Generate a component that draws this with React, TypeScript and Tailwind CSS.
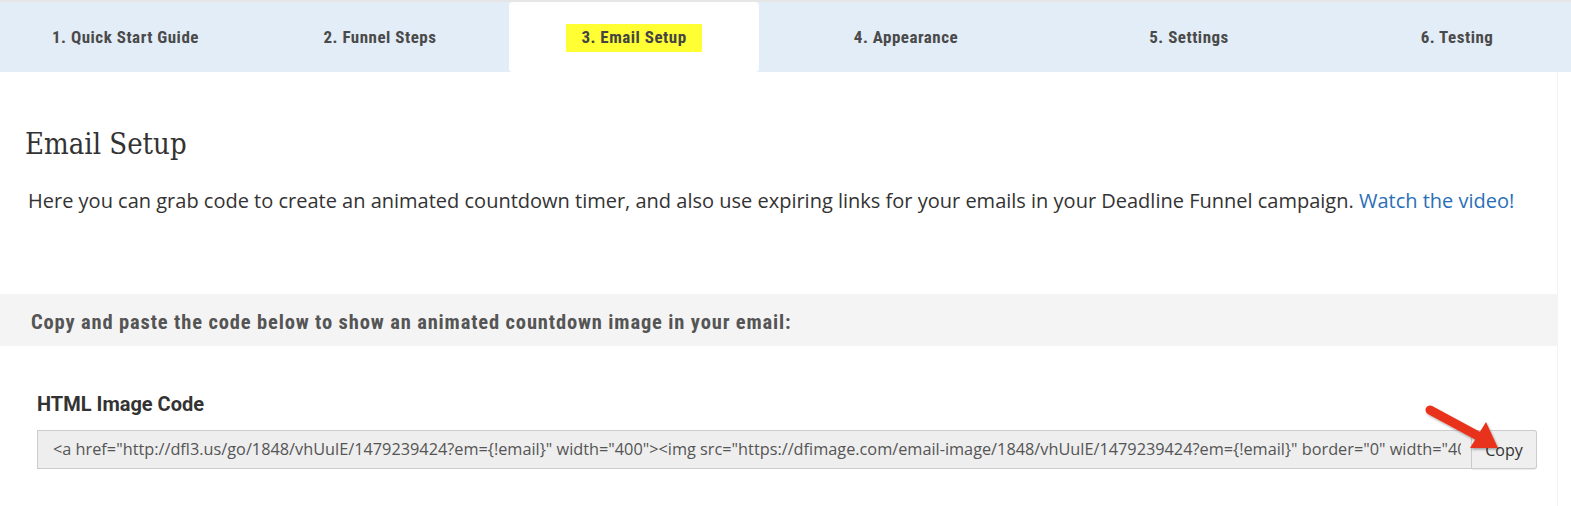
import React from 'react';

const tabs = [
  { label: '1. Quick Start Guide', w: 'w-[251px]' },
  { label: '2. Funnel Steps', w: 'w-[258px]' },
  { label: '3. Email Setup', w: 'w-[250px]', active: true },
  { label: '4. Appearance', w: 'w-[294px]' },
  { label: '5. Settings', w: 'w-[272px]' },
  { label: '6. Testing', w: 'w-[264px]' },
];

const code =
  '<a href="http://dfl3.us/go/1848/vhUulE/1479239424?em={!email}" width="400"><img src="https://dfimage.com/email-image/1848/vhUulE/1479239424?em={!email}" border="0" width="400" alt="countdown" /></a>';

const App: React.FC = () => {
  return (
    <div className="relative w-[1571px] h-[506px] overflow-hidden bg-white font-['Open_Sans',sans-serif] text-[#333]">
      {/* step tabs */}
      <div className="h-[72px] border-t-2 border-[#e6e6e6] bg-[#e3edf7] flex">
        {tabs.map((t) =>
          t.active ? (
            <div key={t.label} className={`${t.w} shrink-0 bg-white rounded-[4px] flex items-center justify-center pt-[1px]`}>
              <span className="bg-[#ffff33] px-[15px] h-[28px] flex items-center font-['Roboto',sans-serif] font-bold font-stretch-condensed text-[17px] tracking-[0.5px] text-[#444]">
                {t.label}
              </span>
            </div>
          ) : (
            <div key={t.label} className={`${t.w} shrink-0 flex items-center justify-center pt-[1px] font-['Roboto',sans-serif] font-bold font-stretch-condensed text-[17px] tracking-[0.5px] text-[#4a4a4a]`}>
              {t.label}
            </div>
          )
        )}
      </div>

      <div className="w-[1558px] border-r border-[#f4f4f4] h-[434px]">
        <h1 className="pl-[25px] pt-[54px] font-['DejaVu_Serif',serif] font-stretch-condensed text-[29px] leading-[36px] text-[#333]">
          Email Setup
        </h1>
        <p className="pl-[28px] mt-[26px] text-[20px] leading-[26px] text-[#333]">
          Here you can grab code to create an animated countdown timer, and also use expiring links for your emails in your Deadline Funnel campaign.{' '}
          <a className="text-[#2a6fb6]">Watch the video!</a>
        </p>

        <div className="mt-[80px] h-[52px] bg-[#f4f4f4] flex items-center pt-[4px] pl-[31px] font-['Roboto',sans-serif] font-bold font-stretch-condensed text-[20.5px] tracking-[0.85px] text-[#555]">
          Copy and paste the code below to show an animated countdown image in your email:
        </div>

        <div className="pl-[37px] pt-[46px]">
          <div className="font-['Roboto',sans-serif] font-bold text-[20px] leading-[24px] text-[#333]">HTML Image Code</div>
          <div className="mt-[14px] flex h-[39px] w-[1500px]">
            <div className="flex-1 min-w-0 bg-[#eeeeee] border border-[#cccccc] flex items-center pl-[15px] pr-[10px] text-[16.3px] text-[#555]">
              <div className="flex-1 min-w-0 overflow-hidden whitespace-nowrap">{code}</div>
            </div>
            <button className="w-[65px] bg-[#efefef] border border-l-0 border-[#cccccc] rounded-r-[3px] text-[16px] text-[#333] shadow-[0_1px_1px_rgba(0,0,0,0.08)]">
              Copy
            </button>
          </div>
        </div>
      </div>

      {/* red pointer arrow */}
      <svg className="absolute left-[1420px] top-[401px]" width="88" height="58" viewBox="0 0 88 58">
        <defs>
          <filter id="sh" x="-20%" y="-20%" width="140%" height="140%">
            <feDropShadow dx="1" dy="1.5" stdDeviation="1.2" floodColor="#000" floodOpacity="0.35" />
          </filter>
        </defs>
        <g filter="url(#sh)">
          <line x1="10" y1="9" x2="60" y2="36" stroke="#e8321b" strokeWidth="9" strokeLinecap="round" />
          <polygon points="78,47 50,47 66,21" fill="#e8321b" />
        </g>
      </svg>
    </div>
  );
};

export default App;
